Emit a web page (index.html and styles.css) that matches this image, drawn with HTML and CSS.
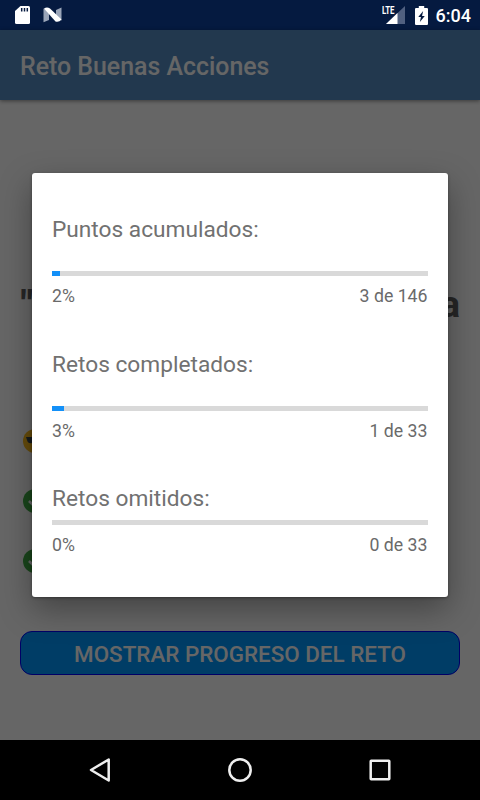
FILE: index.html
```html
<!DOCTYPE html>
<html lang="es">
<head>
    <meta charset="UTF-8">
    <meta name="viewport" content="width=device-width, initial-scale=1.0">
    <title>Reto Buenas Acciones</title>
    <link rel="stylesheet" href="styles.css">
</head>
<body>
    <!-- Status bar -->
    <div class="status-bar">
        <div class="status-left">
            <svg width="16" height="20" viewBox="0 0 16 20">
                <path d="M5.5 1H13.500a1.500 1.500 0 0 1 1.500 1.500V17.500A1.500 1.500 0 0 1 13.500 19H1.500A1.500 1.500 0 0 1 0 17.500V6z" fill="#fff"/>
                <path d="M6.700 3v3.500M9.500 3v3.500M12.300 3v3.500" stroke="#051a40" stroke-width="1.500"/>
            </svg>
            <svg width="20" height="16" viewBox="0 0 20 16">
                <path d="M.5 1.500L6 4v9L.5 15.300z M18.500 .5v13L13 12V3z" fill="#9aa5b8"/>
                <path d="M1 1.500Q4-.5 7 1.500L18.500 12.500Q16 15.500 12.500 14.500z" fill="#fff"/>
            </svg>
        </div>
        <div class="status-right">
            <div class="signal">
                <span class="lte">LTE</span>
                <svg width="19" height="18" viewBox="0 0 19 18">
                    <path d="M19 0v18H0z" fill="#506080"/>
                    <path d="M11.500 7v11H0z" fill="#fff"/>
                </svg>
            </div>
            <svg class="battery" width="13" height="19" viewBox="0 0 12 19" preserveAspectRatio="none">
                <path d="M3.500 0h5v2H11a1 1 0 0 1 1 1v15a1 1 0 0 1-1 1H1a1 1 0 0 1-1-1V3a1 1 0 0 1 1-1h2.500z" fill="#fff"/>
                <path d="M7.500 5L3 11h2.500l-1 5L9 10H6.500z" fill="#051a40"/>
            </svg>
            <span class="clock">6:04</span>
        </div>
    </div>

    <!-- App screen -->
    <div class="screen">
        <div class="toolbar">Reto Buenas Acciones</div>
        <div class="content">
            <div class="quote"><span>"</span><span>a</span></div>
            <div class="icons">
                <svg width="24" height="24" viewBox="0 0 24 24">
                    <circle cx="12" cy="12" r="12" fill="#ffbe1c"/>
                    <path d="M3 8h18v3q-1 4-5 3l-4-4-3 4q-4 1-5-3z" fill="#37474f"/>
                </svg>
                <svg width="24" height="24" viewBox="0 0 24 24">
                    <circle cx="12" cy="12" r="12" fill="#43b048"/>
                    <path d="M6 12l4.500 4.500L18 8" fill="none" stroke="#fff" stroke-width="2.500"/>
                </svg>
                <svg width="24" height="24" viewBox="0 0 24 24">
                    <circle cx="12" cy="12" r="12" fill="#43b048"/>
                    <path d="M6 12l4.500 4.500L18 8" fill="none" stroke="#fff" stroke-width="2.500"/>
                </svg>
            </div>
            <button class="progress-btn">MOSTRAR PROGRESO DEL RETO</button>
        </div>

        <!-- Progress dialog -->
        <div class="scrim">
            <div class="dialog">
                <div class="stat">
                    <h2>Puntos acumulados:</h2>
                    <div class="bar"><div class="fill" style="width: 2.100%"></div></div>
                    <div class="values"><span>2%</span><span>3 de 146</span></div>
                </div>
                <div class="stat">
                    <h2>Retos completados:</h2>
                    <div class="bar"><div class="fill" style="width: 3.100%"></div></div>
                    <div class="values"><span>3%</span><span>1 de 33</span></div>
                </div>
                <div class="stat compact">
                    <h2>Retos omitidos:</h2>
                    <div class="bar"><div class="fill" style="width: 0%"></div></div>
                    <div class="values"><span>0%</span><span>0 de 33</span></div>
                </div>
            </div>
        </div>
    </div>

    <!-- Navigation bar -->
    <div class="nav-bar">
        <svg width="24" height="26" viewBox="0 0 24 26"><path d="M20.700 2.500v21L3 13z"/></svg>
        <svg width="26" height="26" viewBox="0 0 26 26"><circle cx="13" cy="13" r="10.700"/></svg>
        <svg width="24" height="26" viewBox="0 0 24 26"><rect x="2.700" y="3.700" width="18.600" height="18.600" rx=".5"/></svg>
    </div>
</body>
</html>
```

FILE: styles.css
```css
/* Basic Reset */
body, h2, button {
    margin: 0;
    padding: 0;
    box-sizing: border-box;
}

body {
    width: 480px;
    height: 800px;
    display: flex;
    flex-direction: column;
    font-family: Roboto, "Liberation Sans", sans-serif;
    overflow: hidden;
}

svg {
    display: block;
}

/* Status bar */
.status-bar {
    height: 30px;
    box-sizing: border-box;
    display: flex;
    justify-content: space-between;
    padding: 0 10px 0 15px;
    background-color: #051a40;
    color: #fff;
}

.status-left, .status-right {
    display: flex;
    align-items: center;
}

.status-left {
    gap: 12px;
}

.signal {
    position: relative;
    margin-right: 10px;
}

.lte {
    position: absolute;
    left: -4px;
    top: 0;
    font-size: 10.5px;
    line-height: 10px;
    font-weight: bold;
    letter-spacing: -0.1px;
    transform: scaleX(0.75);
    transform-origin: left;
}

.battery {
    margin-right: 8px;
}

.clock {
    font-size: 18px;
    font-weight: 500;
    margin-right: -1px;
}

/* App screen */
.screen {
    position: relative;
    height: 710px;
    display: flex;
    flex-direction: column;
    background-color: #fff;
}

.toolbar {
    height: 70px;
    line-height: 73px;
    padding-left: 20px;
    background-color: #558cc3;
    color: #fff;
    font-size: 24.9px;
    font-weight: 500;
    box-shadow: 0 1px 4px rgba(0, 0, 0, 0.45);
}

.content {
    padding: 182px 20px 0;
}

.quote {
    display: flex;
    justify-content: space-between;
    font-size: 37px;
    line-height: 46px;
    font-weight: bold;
    color: #606060;
}

.quote span:first-child {
    font-weight: 900;
    padding-left: 1px;
}

.icons {
    display: flex;
    flex-direction: column;
    gap: 36px;
    padding: 101px 0 58px 2.5px;
}

.progress-btn {
    display: block;
    width: 440px;
    height: 44px;
    padding-top: 1px;
    border: 1px solid #00f;
    border-radius: 12px;
    background-color: #09f;
    color: #fff;
    font-family: inherit;
    font-size: 22.4px;
    font-weight: 500;
}

/* Dialog */
.scrim {
    position: absolute;
    inset: 0;
    background-color: rgba(0, 0, 0, 0.6);
    display: flex;
    justify-content: center;
    align-items: center;
}

.dialog {
    width: 416px;
    height: 424px;
    box-sizing: border-box;
    padding: 42px 20.5px 0 20px;
    background-color: #fff;
    border-radius: 3px;
    box-shadow: 0 12px 32px rgba(0, 0, 0, 0.35), 0 1px 3px rgba(0, 0, 0, 0.35);
    color: #717171;
}

.stat {
    height: 134.500px;
}

.stat h2 {
    font-size: 22.7px;
    line-height: 30px;
    font-weight: normal;
}

.bar {
    height: 5px;
    margin-top: 26px;
    background-color: #d9d9d9;
}

.compact .bar {
    margin-top: 6px;
}

.fill {
    height: 100%;
    background-color: #1390f8;
}

.values {
    display: flex;
    justify-content: space-between;
    margin-top: 9px;
    font-size: 17.7px;
    line-height: 22px;
    color: #6a6a6a;
}

/* Navigation bar */
.nav-bar {
    height: 60px;
    display: flex;
    justify-content: space-between;
    align-items: center;
    padding: 0 88px;
    background-color: #000;
}

.nav-bar svg {
    fill: none;
    stroke: #eee;
    stroke-width: 2.5;
    stroke-linejoin: round;
}
```
